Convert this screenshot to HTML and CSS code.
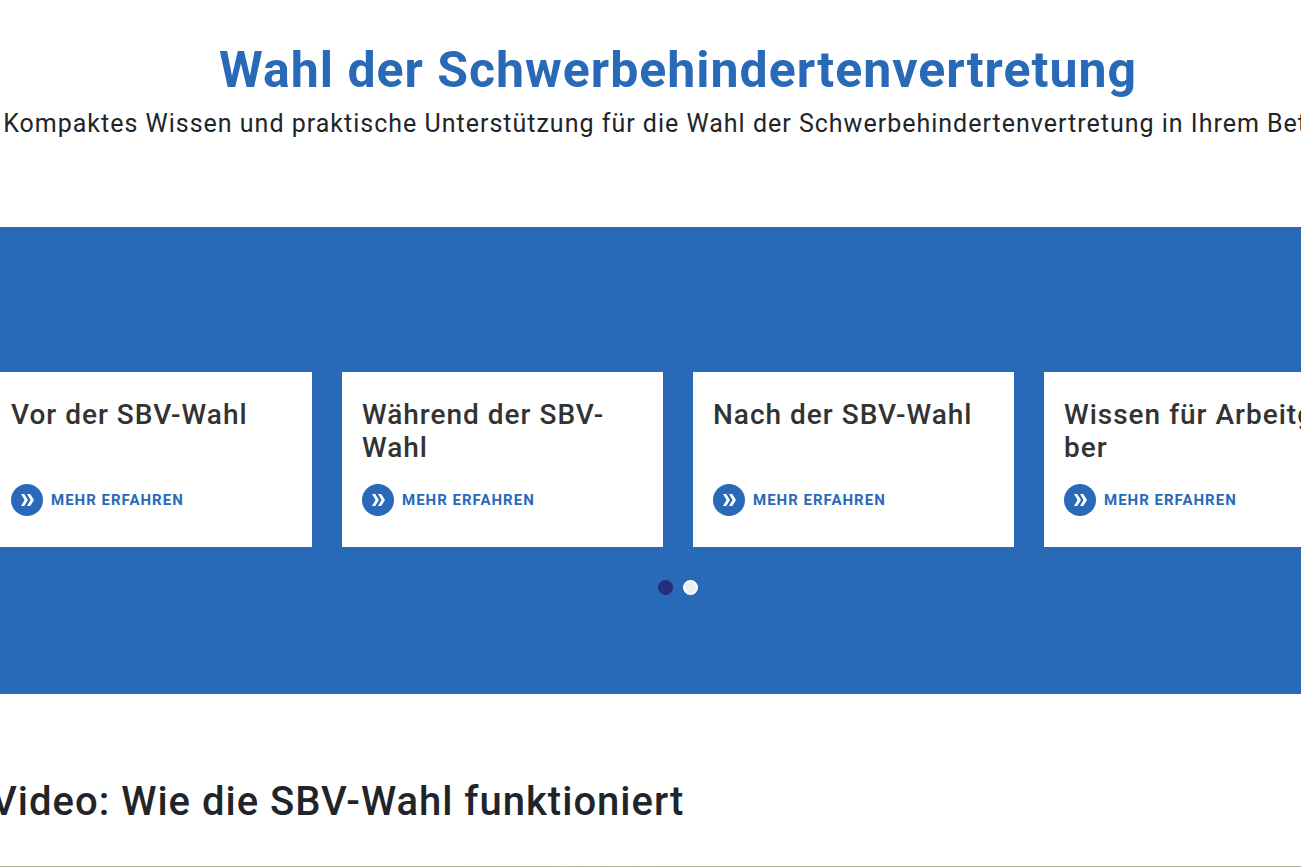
FILE: index.html
```html
<!DOCTYPE html>
<html lang="de">
<head>
    <meta charset="UTF-8">
    <meta name="viewport" content="width=device-width, initial-scale=1.0">
    <title>Wahl der Schwerbehindertenvertretung</title>
    <link rel="stylesheet" href="styles.css">
</head>
<body>
    <svg class="sprite" aria-hidden="true">
        <symbol id="chevrons" viewBox="0 0 32 32">
            <path d="M10 10h3.2l3.8 6-3.8 6H10l3.6-6zM16 10h3.2l3.8 6-3.8 6H16l3.6-6z"/>
        </symbol>
    </svg>

    <header class="intro container">
        <h1>Wahl der Schwerbehindertenvertretung</h1>
        <p>Kompaktes Wissen und praktische Unterstützung für die Wahl der Schwerbehindertenvertretung in Ihrem Betrieb</p>
    </header>

    <section class="topics">
        <div class="container">
            <div class="cards">
                <article class="card">
                    <h3>Vor der SBV-Wahl</h3>
                    <a href="#" class="more"><svg><use href="#chevrons"/></svg>Mehr erfahren</a>
                </article>
                <article class="card">
                    <h3>Während der SBV-Wahl</h3>
                    <a href="#" class="more"><svg><use href="#chevrons"/></svg>Mehr erfahren</a>
                </article>
                <article class="card">
                    <h3>Nach der SBV-Wahl</h3>
                    <a href="#" class="more"><svg><use href="#chevrons"/></svg>Mehr erfahren</a>
                </article>
                <article class="card">
                    <h3>Wissen für Arbeitge&shy;ber</h3>
                    <a href="#" class="more"><svg><use href="#chevrons"/></svg>Mehr erfahren</a>
                </article>
            </div>
            <div class="dots">
                <button class="dot active" aria-label="Seite 1"></button>
                <button class="dot" aria-label="Seite 2"></button>
            </div>
        </div>
    </section>

    <section class="video container">
        <h2>Video: Wie die SBV-Wahl funktioniert</h2>
        <div class="player"></div>
    </section>
</body>
</html>
```
FILE: styles.css
```css
* {
    margin: 0;
    padding: 0;
    box-sizing: border-box;
}

body {
    background-color: #fff;
    color: #212529;
    font-family: Roboto, 'Liberation Sans', sans-serif;
    letter-spacing: 1px;
    overflow-x: hidden;
}

.sprite {
    display: none;
}

/* the content runs wider than the window on both sides */
.container {
    width: calc(100% + 73px);
    margin-left: -9px;
}

.intro {
    padding: 40px 0 84px;
    text-align: center;
}

.intro h1 {
    color: #286ab8;
    font-size: 50px;
    font-weight: 700;
    line-height: 60px;
}

.intro p {
    padding-top: 4px;
    font-size: 25px;
    line-height: 39px;
    white-space: nowrap;
}

.topics {
    background-color: #286ab8;
    padding: 145px 0 99px;
}

.cards {
    display: grid;
    grid-template-columns: repeat(4, 1fr);
    gap: 30px;
}

.card {
    display: flex;
    flex-direction: column;
    justify-content: space-between;
    background-color: #fff;
    min-height: 175px;
    padding: 26px 20px 31px;
}

.card h3 {
    color: #333;
    font-size: 28px;
    font-weight: 500;
    line-height: 33px;
}

.more {
    display: flex;
    align-items: center;
    gap: 8px;
    color: #286ab8;
    font-size: 15px;
    font-weight: 700;
    text-decoration: none;
    text-transform: uppercase;
}

.more svg {
    width: 32px;
    height: 32px;
    border-radius: 50%;
    background-color: #286ab8;
    fill: #fff;
}

.dots {
    display: flex;
    justify-content: center;
    gap: 10px;
    padding-top: 33px;
}

.dot {
    width: 15px;
    height: 15px;
    border: 2px solid #fff;
    border-radius: 50%;
    background-color: #eee;
}

.dot.active {
    border-color: #252f7c;
    background-color: #252f7c;
}

.video {
    padding-top: 84px;
}

.video h2 {
    font-size: 40px;
    font-weight: 500;
    line-height: 48px;
}

.player {
    height: 1px;
    margin-top: 40px;
    background: linear-gradient(90deg, #aab894 30%, #bcb391 42%, #bcb0a0 48%, #aab894 58%);
}
```
